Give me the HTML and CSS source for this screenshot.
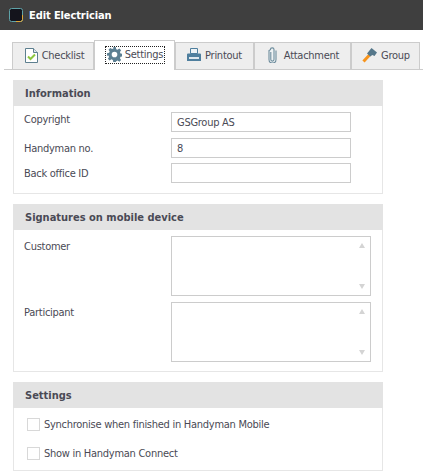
FILE: index.html
```html
<!DOCTYPE html>
<html lang="en">
<head>
    <meta charset="UTF-8">
    <meta name="viewport" content="width=device-width, initial-scale=1.0">
    <title>Edit Electrician</title>
    <link rel="stylesheet" href="styles.css">
</head>
<body>
    <div class="titlebar">
        <svg class="app-icon" width="14" height="14" viewBox="0 0 14 14">
            <rect x="0.5" y="0.5" width="13" height="13" rx="2" fill="#14141c" stroke="#5fa3a8"/>
            <path d="M13.5 7v4.5a2 2 0 0 1-2 2H7" fill="none" stroke="#e0a93a"/>
        </svg>
        <span>Edit Electrician</span>
    </div>

    <div class="tabs">
        <div class="tab tab-checklist">
            <svg width="13" height="15" viewBox="0 0 13 15">
                <path d="M.5.5h8l4 4v10H.5z" fill="#fff" stroke="#5d7f8f"/>
                <path d="M8.500.5v4h4" fill="#dfe6ea" stroke="#5d7f8f"/>
                <path d="M3 8.500l2.500 2.500L10 6.500" fill="none" stroke="#8cc63f" stroke-width="2"/>
            </svg>
            <span>Checklist</span>
        </div>
        <div class="tab tab-settings active">
            <div class="focus">
                <svg width="15" height="15" viewBox="0 0 24 24">
                    <path fill="#5c7f92" fill-rule="evenodd" d="M10 0h4l.7 3.400 2.200.9L19.800 2.400l2.800 2.800-1.900 2.900.9 2.200 3.400.7v4l-3.400.7-.9 2.200 1.900 2.900-2.800 2.800-2.900-1.900-2.200.9L14 24h-4l-.7-3.400-2.200-.9-2.900 1.900-2.800-2.800 1.900-2.900-.9-2.200L0 14v-4l3.400-.7.9-2.200-1.900-2.900 2.800-2.800 2.900 1.900 2.200-.9zM12 7.500a4.500 4.500 0 1 0 0 9 4.500 4.500 0 0 0 0-9z"/>
                </svg>
                <span>Settings</span>
            </div>
        </div>
        <div class="tab tab-printout">
            <svg width="14" height="14" viewBox="0 0 14 14">
                <path d="M3.500.5h7v5h-7z" fill="#eef3f6" stroke="#4f7f9e"/>
                <path d="M1 5.500h12a1 1 0 0 1 1 1V13H0V6.500a1 1 0 0 1 1-1z" fill="#4f7f9e"/>
                <rect x="2" y="9" width="10" height="2" fill="#dfe8ee"/>
            </svg>
            <span>Printout</span>
        </div>
        <div class="tab tab-attachment">
            <svg width="9" height="16" viewBox="0 0 9 16">
                <path d="M2.800 5v7.500a1.600 1.600 0 0 0 3.200 0V2.800a1.800 1.800 0 0 0-3.600-.2L1 3.500v9a3.400 3.400 0 0 0 7 0V3.500" fill="#eef2f4" stroke="#6d8c9c" stroke-width="1.100"/>
            </svg>
            <span>Attachment</span>
        </div>
        <div class="tab tab-group">
            <svg width="15" height="15" viewBox="0 0 15 15">
                <path d="M7.500 7L1.500 13.500" stroke="#f7941d" stroke-width="3" fill="none"/>
                <path d="M5 5.500L9.500 0 15 4.500l-2.500 3.500-2.200-1-2 1.500z" fill="#55778a"/>
            </svg>
            <span>Group</span>
        </div>
    </div>

    <div class="content">
        <div class="panel">
            <div class="panel-head">Information</div>
            <div class="panel-body fields">
                <div class="field">
                    <label class="label-top">Copyright</label>
                    <div class="input">GSGroup AS</div>
                </div>
                <div class="field">
                    <label>Handyman no.</label>
                    <div class="input">8</div>
                </div>
                <div class="field field-tight">
                    <label>Back office ID</label>
                    <div class="input"></div>
                </div>
            </div>
        </div>

        <div class="panel">
            <div class="panel-head">Signatures on mobile device</div>
            <div class="panel-body memos">
                <div class="field">
                    <label>Customer</label>
                    <div class="memo"><i class="arrow-up"></i><i class="arrow-down"></i></div>
                </div>
                <div class="field">
                    <label>Participant</label>
                    <div class="memo"><i class="arrow-up"></i><i class="arrow-down"></i></div>
                </div>
            </div>
        </div>

        <div class="panel">
            <div class="panel-head">Settings</div>
            <div class="panel-body checks">
                <div class="check"><span class="box"></span>Synchronise when finished in Handyman Mobile</div>
                <div class="check"><span class="box"></span>Show in Handyman Connect</div>
            </div>
        </div>
    </div>
</body>
</html>
```

FILE: styles.css
```css
body {
    margin: 0;
    background: #fff;
    color: #4a4a55;
    font-family: "DejaVu Sans Condensed", "DejaVu Sans", sans-serif;
    font-size: 11px;
    letter-spacing: -0.27px;
    overflow: hidden;
}

.titlebar {
    height: 30px;
    background: #3f3f3f;
    color: #fff;
    font-weight: bold;
    letter-spacing: -0.1px;
    display: flex;
    align-items: center;
    padding-left: 9px;
    gap: 6px;
}

.tabs {
    display: flex;
    align-items: flex-end;
    height: 29px;
    margin: 10px 0 0 4px;
    padding-left: 8px;
    border-bottom: 1px solid #ccc;
}

.tab {
    box-sizing: border-box;
    height: 28px;
    margin-bottom: -1px;
    padding-bottom: 2px;
    background: #eeeeee;
    border: 1px solid #ccc;
    display: flex;
    align-items: center;
    justify-content: center;
    gap: 4px;
}

.tab svg { flex: none; }

.tab-checklist { width: 82px; padding-left: 3px; }
.tab-settings { width: 81px; padding-left: 1px; }
.tab-printout { width: 79px; }
.tab-attachment { width: 97px; padding-left: 2px; gap: 7px; }
.tab-group { width: 69px; padding-left: 1px; }

.tab.active {
    height: 30px;
    background: #fff;
    border-bottom: none;
}

.focus {
    display: flex;
    align-items: center;
    gap: 3px;
    padding: 0 1px;
    height: 16px;
    border: 1px dotted #222;
}

.content {
    padding: 10px 0 0 13px;
    width: 370px;
}

.panel { margin-bottom: 10px; }

.panel-head {
    height: 26px;
    line-height: 28px;
    background: #e3e3e3;
    padding-left: 12px;
    font-weight: bold;
    letter-spacing: 0;
}

.panel-body {
    box-sizing: border-box;
    border: 1px solid #e6e6e6;
    border-top: none;
}

.fields { height: 88px; padding: 6px 0 0 10px; }
.memos { height: 142px; padding: 6px 0 0 10px; }
.checks { height: 63px; padding: 9px 0 0 13px; }

.field {
    display: flex;
    margin-bottom: 6px;
}

.field-tight { margin-top: -1px; }

.field label {
    width: 147px;
    flex: none;
    padding-top: 4px;
}

.field .label-top { padding-top: 1px; }

.input {
    box-sizing: border-box;
    width: 180px;
    height: 20px;
    line-height: 20px;
    padding-left: 5px;
    background: #fff;
    border: 1px solid #ccc;
}

.memo {
    box-sizing: border-box;
    position: relative;
    width: 200px;
    height: 60px;
    background: #fff;
    border: 1px solid #ccc;
}

.arrow-up,
.arrow-down {
    position: absolute;
    right: 5px;
    width: 0;
    height: 0;
    border-left: 3.500px solid transparent;
    border-right: 3.500px solid transparent;
}

.arrow-up { top: 6px; border-bottom: 5px solid #d4d4d4; }
.arrow-down { bottom: 6px; border-top: 5px solid #d4d4d4; }

.check {
    display: flex;
    align-items: center;
    height: 14px;
    margin-bottom: 15px;
}

.box {
    box-sizing: border-box;
    width: 13px;
    height: 13px;
    margin-right: 4px;
    background: #fff;
    border: 1px solid #d8d8d8;
}
```
